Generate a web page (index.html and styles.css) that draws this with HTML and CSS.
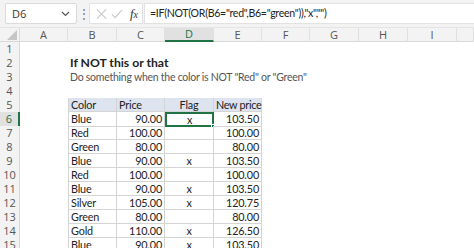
FILE: index.html
```html
<!DOCTYPE html>
<html>
<head>
<meta charset="utf-8">
<link rel="stylesheet" href="styles.css">
</head>
<body>
<div class="toolbar">
  <div class="namebox"><span class="nb-text">D6</span>
    <svg class="chev" width="9" height="6" viewBox="0 0 9 6"><path d="M1 1 L4.5 4.5 L8 1" fill="none" stroke="#555" stroke-width="1.2"/></svg>
  </div>
  <div class="dots">⋮</div>
  <div class="fx-icons">
    <svg width="12" height="12" viewBox="0 0 12 12"><path d="M1 1 L11 11 M11 1 L1 11" stroke="#c8c8c8" stroke-width="1.2"/></svg>
    <svg width="13" height="12" viewBox="0 0 13 12"><path d="M1 6.5 L4.5 10 L12 1.5" fill="none" stroke="#c8c8c8" stroke-width="1.2"/></svg>
    <span class="fx"><i>f</i><span class="x">x</span></span>
  </div>
  <div class="formula">=IF(NOT(OR(B6="red",B6="green")),"x","")</div>
</div>

<div class="sheet">
  <div class="row colhdr">
    <div class="corner"><svg width="10" height="10" viewBox="0 0 10 10"><path d="M10 0 L10 10 L0 10 Z" fill="#c6c6c6"/></svg></div>
    <div class="ch">A</div><div class="ch">B</div><div class="ch">C</div><div class="ch active">D</div><div class="ch">E</div><div class="ch">F</div><div class="ch">G</div><div class="ch">H</div><div class="ch">I</div><div class="ch last"></div>
  </div>
  <div class="row"><div class="rh">1</div></div>
  <div class="row"><div class="rh">2</div><div class="c title">If NOT this or that</div></div>
  <div class="row"><div class="rh">3</div><div class="c sub">Do something when the color is NOT "Red" or "Green"</div></div>
  <div class="row"><div class="rh">4</div></div>
  <div class="row"><div class="rh">5</div><div class="c t th colB">Color</div><div class="c t th">Price</div><div class="c t th ctr">Flag</div><div class="c t th num">New price</div></div>
  <div class="row"><div class="rh sel">6</div><div class="c t colB">Blue</div><div class="c t num">90.00</div><div class="c t ctr selcell">x<span class="handle"></span></div><div class="c t num">103.50</div></div>
  <div class="row"><div class="rh">7</div><div class="c t colB">Red</div><div class="c t num">100.00</div><div class="c t ctr"></div><div class="c t num">100.00</div></div>
  <div class="row"><div class="rh">8</div><div class="c t colB">Green</div><div class="c t num">80.00</div><div class="c t ctr"></div><div class="c t num">80.00</div></div>
  <div class="row"><div class="rh">9</div><div class="c t colB">Blue</div><div class="c t num">90.00</div><div class="c t ctr">x</div><div class="c t num">103.50</div></div>
  <div class="row"><div class="rh">10</div><div class="c t colB">Red</div><div class="c t num">100.00</div><div class="c t ctr"></div><div class="c t num">100.00</div></div>
  <div class="row"><div class="rh">11</div><div class="c t colB">Blue</div><div class="c t num">90.00</div><div class="c t ctr">x</div><div class="c t num">103.50</div></div>
  <div class="row"><div class="rh">12</div><div class="c t colB">Silver</div><div class="c t num">105.00</div><div class="c t ctr">x</div><div class="c t num">120.75</div></div>
  <div class="row"><div class="rh">13</div><div class="c t colB">Green</div><div class="c t num">80.00</div><div class="c t ctr"></div><div class="c t num">80.00</div></div>
  <div class="row"><div class="rh">14</div><div class="c t colB">Gold</div><div class="c t num">110.00</div><div class="c t ctr">x</div><div class="c t num">126.50</div></div>
  <div class="row"><div class="rh">15</div><div class="c t colB">Blue</div><div class="c t num">90.00</div><div class="c t ctr">x</div><div class="c t num">103.50</div></div>
</div>
</body>
</html>
```
FILE: styles.css
```css
* { box-sizing: border-box; }
html, body { margin: 0; padding: 0; }
body {
  width: 474px; height: 248px; overflow: hidden; background: #fff;
  font-family: "Open Sans", "Noto Sans", sans-serif; color: #222;
}
.toolbar {
  height: 28px; background: #f3f3f3; display: flex; align-items: center;
  padding: 0 0 0 5px; border-bottom: 1px solid #e4e4e4;
}
.namebox {
  width: 72px; height: 21px; background: #fff; border: 1px solid #dadada; border-radius: 2px;
  display: flex; align-items: center; justify-content: space-between; padding: 0 6px 0 6px;
  font-size: 11px; color: #333;
}
.dots { width: 11px; text-align: center; color: #777; font-size: 12px; margin-left: 1px; }
.fx-icons {
  height: 21px; background: #fff; border: 1px solid #e2e2e2; display: flex; align-items: center;
  gap: 4px; padding: 0 4px 0 6px; margin-left: 0;
  width: 54px;
}
.fx { font-family: "Liberation Serif", serif; font-size: 13px; color: #333; margin-left: 3px; }
.fx .x { font-size: 10px; font-style: italic; }
.formula {
  flex: 1; height: 21px; background: #fff; border: 1px solid #e2e2e2; border-right: none;
  margin-left: 1px; padding-left: 5px; line-height: 19px; color: #222;
  font-family: "Lato", sans-serif; font-size: 10.6px; letter-spacing: -0.3px;
  white-space: nowrap; overflow: hidden;
}
.sheet { display: flex; flex-direction: column; }
.row {
  display: grid; height: 14px;
  grid-template-columns: 20px 48px 49px 48px 49px 48px 48px 49px 49px 49px 17px;
}
.colhdr { background: #f3f3f3; border-bottom: 1px solid #d8d8d8; height: 14px; }
.corner { display: flex; align-items: flex-end; justify-content: flex-end; padding: 0 2px 2px 0; border-right: 1px solid #dcdcdc; }
.ch {
  font-size: 11px; color: #555; text-align: center; line-height: 13px;
  border-right: 1px solid #e0e0e0;
}
.ch.active { background: #e1e1e1; color: #217346; border-bottom: 2px solid #217346; line-height: 12px; }
.rh {
  grid-column: 1; background: #f3f3f3; border-right: 1px solid #d8d8d8;
  font-size: 11px; color: #555; text-align: center; line-height: 14px;
}
.rh.sel { background: #e1e1e1; color: #217346; border-right: 2px solid #217346; }
.c {
  font-family: "Lato", sans-serif;
  font-size: 10.8px; letter-spacing: -0.15px; line-height: 14px; white-space: nowrap;
}
.title { grid-column: 3 / span 5; font-weight: bold; padding-left: 2px; color: #222; font-size: 12.2px; letter-spacing: 0; }
.sub { grid-column: 3 / span 6; padding-left: 2px; color: #555; font-size: 10.5px; letter-spacing: -0.25px; }
.t { border-right: 1px solid #d4d4d4; border-bottom: 1px solid #d4d4d4; padding: 0 2px; position: relative; line-height: 13px; }
.colB { grid-column: 3; border-left: 1px solid #d4d4d4; }
.th { background: #dde4ef; }
.th.num { letter-spacing: -0.3px; padding-right: 1px; }
.num { text-align: right; }
.ctr { text-align: center; }
.selcell { border: 2px solid #217346; line-height: 11px; }
.handle {
  position: absolute; right: -3px; bottom: -3px; width: 4px; height: 4px;
  background: #217346; border: 1px solid #fff;
}
```
